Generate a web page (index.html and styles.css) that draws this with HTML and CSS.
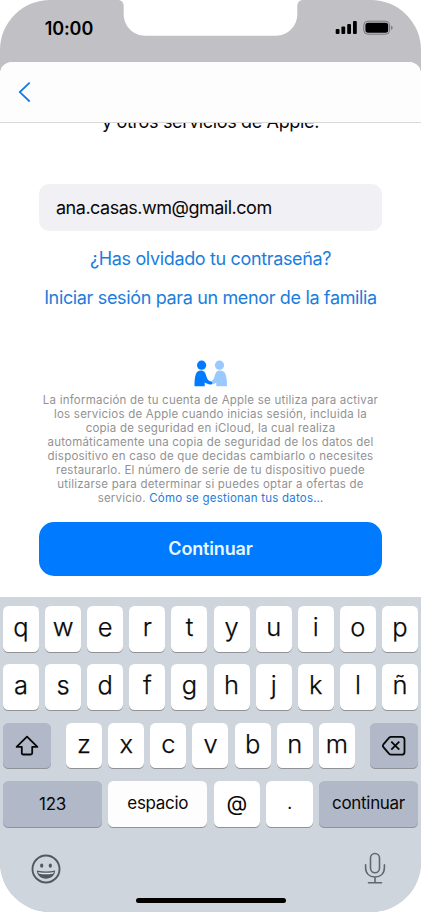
FILE: index.html
```html
<!DOCTYPE html>
<html lang="es">
<head>
<meta charset="utf-8">
<title>Cuenta de Apple</title>
<link rel="stylesheet" href="styles.css">
</head>
<body>
<div class="phone">
  <header class="status">
    <span class="time">10:00</span>
    <svg class="notch" width="175" height="36" viewBox="0 0 175 36"><path d="M-5 0C-2 0 .7 2 .7 6V14C.7 26 10 35.7 22 35.7H153C165 35.7 174.3 26 174.3 14V6C174.3 2 177 0 180 0Z" fill="#fff"/></svg>
    <svg class="indicators" width="58" height="16" viewBox="0 0 58 16">
      <rect x="0.7" y="9" width="3.8" height="5" rx="1"/><rect x="6.4" y="6.6" width="3.8" height="7.4" rx="1"/><rect x="12.2" y="4" width="3.8" height="10" rx="1"/><rect x="18" y="1" width="3.8" height="13" rx="1"/>
      <rect x="28.8" y="1.2" width="25.8" height="13" rx="4" fill="none" stroke="#77767b"/>
      <rect x="30.4" y="2.7" width="22.8" height="10" rx="2.6"/>
      <path d="M56.1 5.5Q57.7 6.2 57.7 7.8T56.1 10Z" fill="#77767b"/>
    </svg>
  </header>
  <main class="sheet">
    <nav class="nav"><svg width="14" height="22" viewBox="0 0 14 22"><path d="M11.7 1.7 1.8 11.1 11.7 20.5" fill="none" stroke="#1578e5" stroke-width="1.8"/></svg></nav>
    <div class="intro"><span>y otros servicios de Apple.</span></div>
    <div class="field"><span>ana.casas.wm@gmail.com</span></div>
    <a class="link forgot">¿Has olvidado tu contraseña?</a>
    <a class="link child">Iniciar sesión para un menor de la familia</a>
    <svg class="people" width="34" height="28" viewBox="0 0 34 28">
      <g fill="#99c9ff"><circle cx="25.5" cy="5.2" r="4.6"/><path d="M15 21.8C18.5 21.5 19.8 19.5 20.7 16C21.7 12.3 23 10.6 26 10.6C31.5 10.6 33 15.5 33 26.2H22.3V22.6C19.5 24.4 17 25 15 24.4Z"/></g>
      <g fill="#007aff"><circle cx="7.6" cy="5.2" r="4.6"/><path d="M.5 26.2C.5 15.5 2 10.6 6.8 10.6C9.8 10.6 11.3 12.3 12.3 16C13.2 19.5 14.5 21.2 17.4 21.7C18.8 22 18.6 24.1 17 24.3C14.8 24.5 12.8 23.8 10.7 22.5V26.2Z"/></g>
    </svg>
    <div class="legal">
      <p>La información de tu cuenta de Apple se utiliza para activar</p>
      <p>los servicios de Apple cuando inicias sesión, incluida la</p>
      <p>copia de seguridad en iCloud, la cual realiza</p>
      <p>automáticamente una copia de seguridad de los datos del</p>
      <p>dispositivo en caso de que decidas cambiarlo o necesites</p>
      <p>restaurarlo. El número de serie de tu dispositivo puede</p>
      <p>utilizarse para determinar si puedes optar a ofertas de</p>
      <p>servicio. <a>Cómo se gestionan tus datos…</a></p>
    </div>
    <button class="primary">Continuar</button>
  </main>
  <section class="keyboard">
    <div class="row"><b>q</b><b>w</b><b>e</b><b>r</b><b>t</b><b>y</b><b>u</b><b>i</b><b>o</b><b>p</b></div>
    <div class="row"><b>a</b><b>s</b><b>d</b><b>f</b><b>g</b><b>h</b><b>j</b><b>k</b><b>l</b><b>ñ</b></div>
    <div class="row row-edit">
      <b class="dark"><svg width="24" height="22" viewBox="0 0 24 22"><path d="M12 1.6 22.4 11.8H17.2V18Q17.2 19.5 15.7 19.5H8.3Q6.8 19.5 6.8 18V11.8H1.6Z"/></svg></b>
      <div class="letters"><b>z</b><b>x</b><b>c</b><b>v</b><b>b</b><b>n</b><b>m</b></div>
      <b class="dark"><svg width="26" height="22" viewBox="0 0 26 22"><path d="M10 1.8H20.7Q23.5 1.8 23.5 4.6V16.9Q23.5 19.7 20.7 19.7H10Q9 19.7 8 18.7L2.4 12.2Q1.2 10.8 2.4 9.3L8 2.8Q9 1.8 10 1.8ZM10.3 6.7 18.3 14.7M18.3 6.7 10.3 14.7"/></svg></b>
    </div>
    <div class="row row-space"><b class="dark num">123</b><b class="space">espacio</b><b class="at">@</b><b class="dot">.</b><b class="dark go">continuar</b></div>
    <div class="tools">
      <svg width="30" height="30" viewBox="0 0 30 30"><circle cx="15" cy="15" r="13.5" fill="none" stroke="#535860" stroke-width="1.9"/><ellipse cx="10.7" cy="11.7" rx="1.6" ry="2.1"/><ellipse cx="19.3" cy="11.7" rx="1.6" ry="2.1"/><path d="M5.8 16.6Q15 18.6 24.2 16.6C23.8 21.6 20 24.8 15 24.8S6.2 21.6 5.8 16.6Z"/><path d="M7.2 17.9Q15 19.6 22.8 17.9L22.2 19.4Q15 21.2 7.8 19.4Z" fill="#e5e9ef"/></svg>
      <svg class="mic" width="22" height="32" viewBox="0 0 22 32"><g fill="none" stroke="#62676f" stroke-width="1.6" stroke-linecap="round"><rect x="6.5" y="1.5" width="9" height="19.2" rx="4.5"/><path d="M1.6 12.8V15.5C1.6 21.5 5.5 25 11 25S20.4 21.5 20.4 15.5V12.8M11 25V30.7M4.5 30.7H17.5"/></g></svg>
    </div>
    <div class="home"></div>
  </section>
</div>
</body>
</html>
```
FILE: styles.css
```css
* { box-sizing: border-box; }
body { margin: 0; background: #fff; font-family: Inter, "Liberation Sans", sans-serif; color: #080808; }
.phone { width: 421px; height: 912px; border-radius: 50px; overflow: hidden; background: #c1c0c5; display: flex; flex-direction: column; }
.status { position: relative; height: 61.5px; flex: none; display: flex; justify-content: space-between; padding: 18px 28px 0 44.7px; }
.time { font-size: 18px; font-weight: 600; line-height: 21px; letter-spacing: -0.1px; color: #000; }
.notch { position: absolute; left: 123px; top: 0; overflow: visible; }
.indicators { margin-top: 2px; }
.sheet { height: 535.5px; flex: none; background: #fff; border-radius: 12px 12px 0 0; overflow: hidden; display: flex; flex-direction: column; align-items: center; }
.nav { width: 100%; height: 61px; flex: none; background: #fdfdfd; border-bottom: 1px solid #d9d9db; padding: 19px 0 0 18px; }
.nav svg { display: block; }
.intro { height: 61.5px; flex: none; overflow: hidden; }
.intro span { display: block; margin-top: -12px; font-size: 18px; line-height: 22px; letter-spacing: -0.34px; white-space: nowrap; }
.field { width: 343px; height: 47px; flex: none; background: #f1f0f5; border-radius: 10px; padding-left: 17px; line-height: 48px; font-size: 18px; letter-spacing: -0.49px; }
.link { color: #1b7ddd; font-size: 18px; line-height: 24px; letter-spacing: -0.35px; white-space: nowrap; }
.forgot { margin-top: 16px; }
.child { margin-top: 15px; }
.people { margin-top: 50px; flex: none; }
.legal { margin-top: 5px; font-size: 11.5px; line-height: 14.07px; letter-spacing: 0.22px; color: #929294; text-align: center; white-space: nowrap; }
.legal p { margin: 0; }
.legal a { color: #1b7ddd; }
.primary { width: 343px; height: 54px; flex: none; margin-top: 16.5px; border: 0; border-radius: 15px; background: #007aff; color: #e9f8ff; font: 600 18px/54px Inter, sans-serif; letter-spacing: -0.15px; padding: 0; }
.keyboard { flex: 1; background: #cfd5dd; padding: 9px 3px 0; display: flex; flex-direction: column; }
.row { display: flex; justify-content: space-between; height: 46px; margin-bottom: 12.4px; flex: none; }
.row b { width: 36px; height: 45.5px; border-radius: 5.5px; background: #fff; box-shadow: 0 1px 0 #8f9297; font-size: 25.5px; font-weight: 300; -webkit-text-stroke: 0.25px #080808; line-height: 41px; text-align: center; }
.row .dark { background: #b1b8c7; }
.row-edit .dark { width: 48px; display: flex; align-items: center; justify-content: center; }
.row-edit path { fill: none; stroke: #080808; stroke-width: 1.8; stroke-linejoin: round; }
.letters { width: 289px; display: flex; justify-content: space-between; }
.row-space b { font-size: 17px; font-weight: 400; -webkit-text-stroke: 0; line-height: 44px; letter-spacing: -0.3px; }
.row-space .num, .row-space .go, .row-space .space { width: 99px; }
.row-space .num { line-height: 46px; }
.row-space .space { background: #fdfdfd; }
.row-space .at, .row-space .dot { width: 46.5px; }
.row-space .at { font-size: 21.5px; }
.tools { display: flex; justify-content: space-between; padding: 7px 35px 0 31px; height: 57px; flex: none; margin: 0 -3px; }
.tools svg { fill: #535860; margin-top: 7px; }
.tools .mic { margin-top: 5px; }
.home { width: 150px; height: 5px; border-radius: 3px; background: #000; margin: 1px auto 0; }
```
